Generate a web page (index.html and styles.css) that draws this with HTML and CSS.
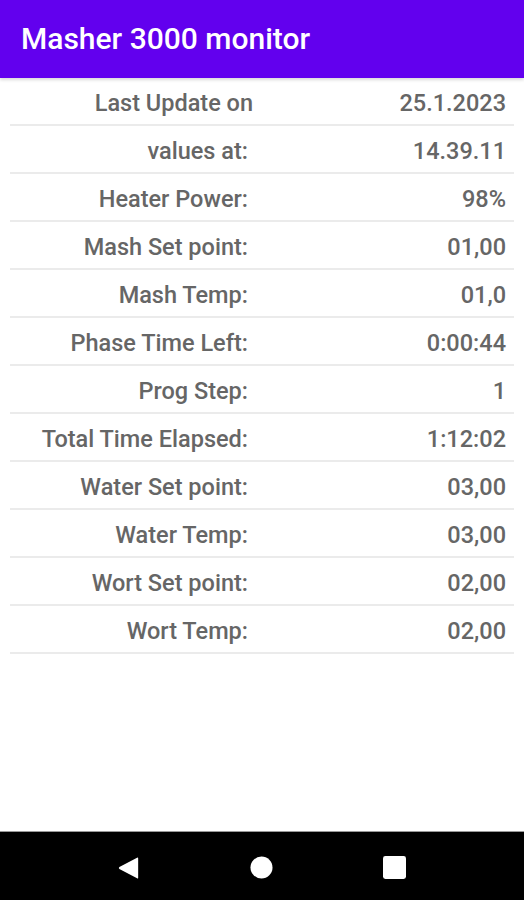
FILE: index.html
```html
<!DOCTYPE html>
<html lang="en">
<head>
    <meta charset="UTF-8">
    <meta name="viewport" content="width=device-width, initial-scale=1.0">
    <title>Masher 3000 monitor</title>
    <link rel="stylesheet" href="styles.css">
</head>
<body>
    <div class="screen">
        <header class="app-bar">
            <h1>Masher 3000 monitor</h1>
        </header>

        <main class="values">
            <div class="row"><span class="label label-nocolon">Last Update on</span><span class="value">25.1.2023</span></div>
            <div class="row"><span class="label">values at:</span><span class="value">14.39.11</span></div>
            <div class="row"><span class="label">Heater Power:</span><span class="value">98%</span></div>
            <div class="row"><span class="label">Mash Set point:</span><span class="value">01,00</span></div>
            <div class="row"><span class="label">Mash Temp:</span><span class="value">01,0</span></div>
            <div class="row"><span class="label">Phase Time Left:</span><span class="value">0:00:44</span></div>
            <div class="row"><span class="label">Prog Step:</span><span class="value">1</span></div>
            <div class="row"><span class="label">Total Time Elapsed:</span><span class="value">1:12:02</span></div>
            <div class="row"><span class="label">Water Set point:</span><span class="value">03,00</span></div>
            <div class="row"><span class="label">Water Temp:</span><span class="value">03,00</span></div>
            <div class="row"><span class="label">Wort Set point:</span><span class="value">02,00</span></div>
            <div class="row"><span class="label">Wort Temp:</span><span class="value">02,00</span></div>
        </main>

        <nav class="nav-bar">
            <svg class="nav-icon" viewBox="0 0 24 24" width="22" height="24">
                <path d="M22 1.5 L22 22.5 Q22 24 20.8 23.3 L1.5 13 Q0.3 12 1.5 11 L20.8 0.7 Q22 0 22 1.5 Z" fill="#fff"/>
            </svg>
            <svg class="nav-icon" viewBox="0 0 24 24" width="23" height="23">
                <circle cx="12" cy="12" r="11.5" fill="#fff"/>
            </svg>
            <svg class="nav-icon" viewBox="0 0 24 24" width="23" height="23">
                <rect x="0" y="0" width="24" height="24" rx="2.5" fill="#fff"/>
            </svg>
        </nav>
    </div>
</body>
</html>
```

FILE: styles.css
```css
body {
    margin: 0;
    padding: 0;
    font-family: Roboto, "Noto Sans", sans-serif;
    background-color: #fff;
}

.screen {
    display: flex;
    flex-direction: column;
    height: 900px;
}

.app-bar {
    background-color: #6200ee;
    height: 78px;
    display: flex;
    align-items: center;
    padding: 0 21px;
    box-shadow: 0 2px 3px rgba(0, 0, 0, 0.15);
}

.app-bar h1 {
    margin: 0;
    color: #fff;
    font-size: 30px;
    font-weight: 500;
    padding-bottom: 1px;
}

.values {
    flex: 1;
    padding: 0 10px;
}

.row {
    box-sizing: border-box;
    display: grid;
    grid-template-columns: 238px 1fr;
    height: 48px;
    padding-top: 3px;
    align-items: center;
    border-bottom: 2px solid #ebebeb;
    color: #666;
    font-size: 23.5px;
    font-weight: 500;
}

.label {
    text-align: right;
}

.label-nocolon {
    margin-right: -5px;
}

.value {
    text-align: right;
    padding-right: 8px;
}

.nav-bar {
    box-sizing: border-box;
    height: 69px;
    background-color: #000;
    border-top: 1px solid #999;
    display: flex;
    justify-content: center;
    align-items: center;
    gap: 110px;
    padding-top: 3px;
}

.nav-icon {
    display: block;
}
```
